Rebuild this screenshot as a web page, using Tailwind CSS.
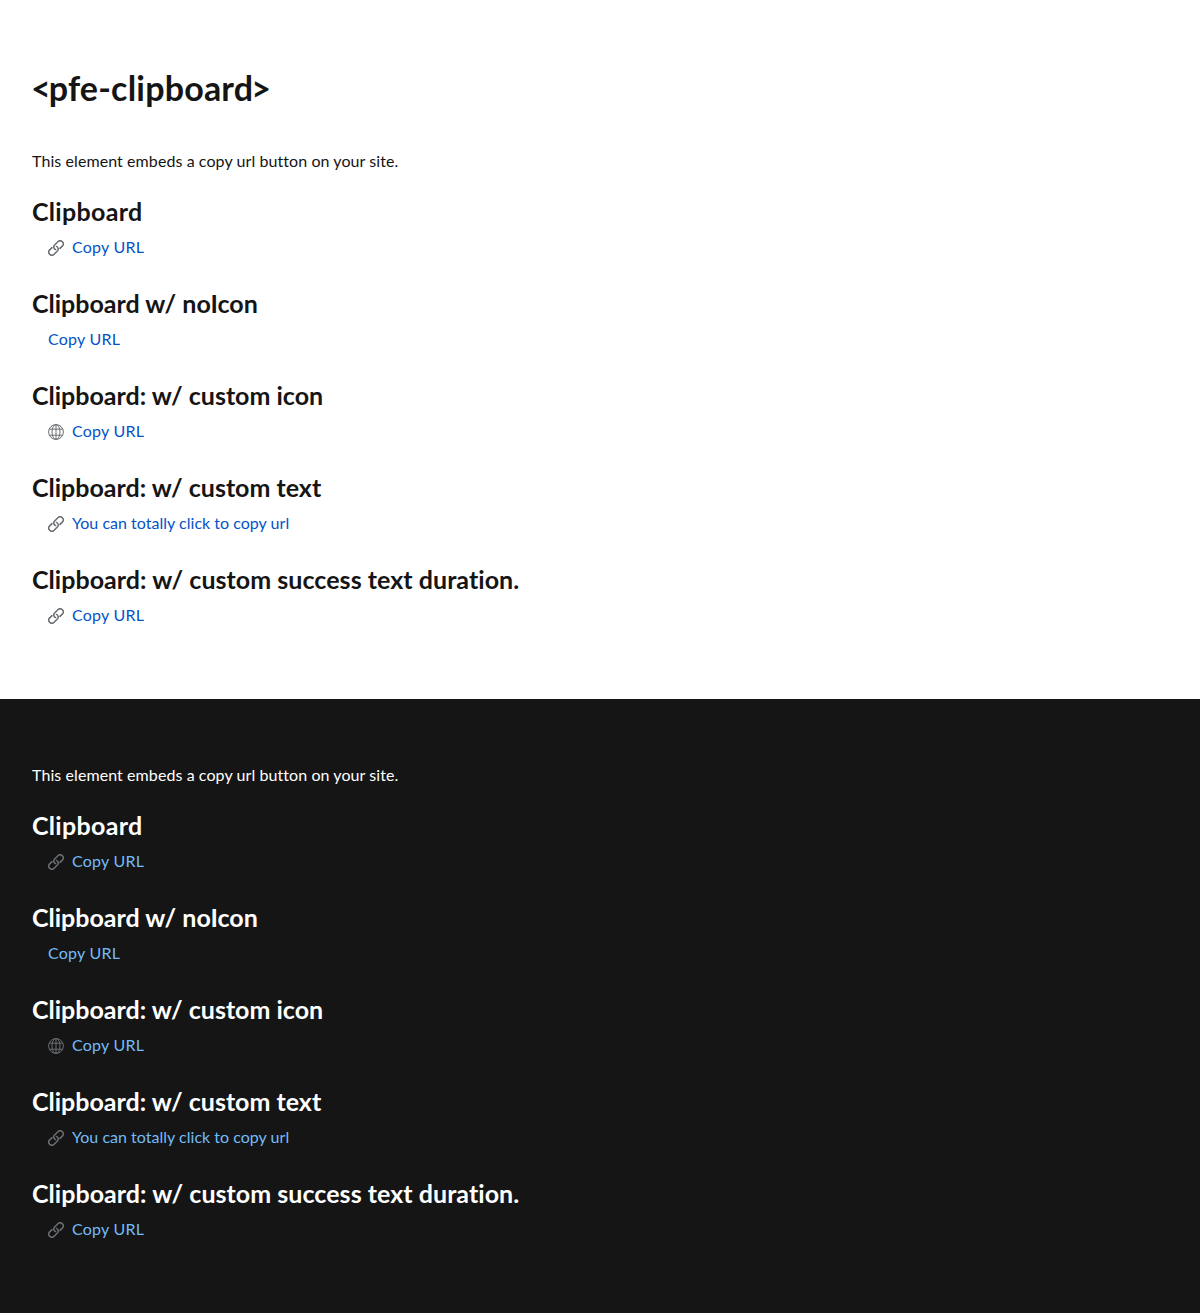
<!DOCTYPE html>
<html lang="en">
<head>
<meta charset="utf-8">
<title>pfe-clipboard</title>
<script src="https://cdn.jsdelivr.net/npm/@tailwindcss/browser@4"></script>
</head>
<body class="bg-white font-['Lato',sans-serif] text-base text-[#151515]">
<svg class="hidden">
  <symbol id="link" viewBox="0 0 16 16">
    <g fill="none" stroke="currentColor" stroke-width="1.5" stroke-linecap="round">
      <path d="M7.6 9.6A2.8 2.8 0 0 1 6.4 5.2L9.9 1.7A2.9 2.9 0 0 1 14.3 6.1L12 8.4"/>
      <path d="M8.4 6.4A2.8 2.8 0 0 1 9.6 10.8L6.1 14.3A2.9 2.9 0 0 1 1.7 9.9L4 7.6"/>
    </g>
  </symbol>
  <symbol id="globe" viewBox="0 0 16 16">
    <g fill="none" stroke="currentColor" stroke-width="1">
      <circle cx="8" cy="8" r="7.4"/>
      <ellipse cx="8" cy="8" rx="4" ry="7.4"/>
      <path d="M8 .6v14.8M1.5 5.2h13M1.5 11.2h13"/>
    </g>
  </symbol>
</svg>
<section class="h-[699px] px-8 pt-16">
  <h1 class="h-[50px] whitespace-nowrap text-[34px] leading-[48px] font-bold"><span class="-ml-px tracking-[-2px]">&lt;</span><span class="tracking-[0.2px]">pfe-clipboard</span><span class="-ml-0.5">&gt;</span></h1>
  <p class="mt-[35px] h-6 leading-6 tracking-[0.08px]">This element embeds a copy url button on your site.</p>
  <div class="mt-[23px] flex flex-col gap-8 text-[#0453c8]">
    <div>
      <h2 class="h-8 text-[25px] leading-[30px] font-bold tracking-[0.3px] text-[#151515]">Clipboard</h2>
      <div class="flex h-7 items-center gap-2 pt-2.5 pl-4"><svg class="mt-0.5 size-4 text-[#6a6e73]"><use href="#link"/></svg><a class="tracking-[0.22px]">Copy URL</a></div>
    </div>
    <div>
      <h2 class="h-8 text-[25px] leading-[30px] font-bold text-[#151515]">Clipboard w/ noIcon</h2>
      <div class="flex h-7 items-center gap-2 pt-2.5 pl-4"><a class="tracking-[0.22px]">Copy URL</a></div>
    </div>
    <div>
      <h2 class="h-8 text-[25px] leading-[30px] font-bold text-[#151515]">Clipboard: w/ custom icon</h2>
      <div class="flex h-7 items-center gap-2 pt-2.5 pl-4"><svg class="mt-0.5 size-4 text-[#6a6e73]"><use href="#globe"/></svg><a class="tracking-[0.22px]">Copy URL</a></div>
    </div>
    <div>
      <h2 class="h-8 text-[25px] leading-[30px] font-bold text-[#151515]">Clipboard: w/ custom text</h2>
      <div class="flex h-7 items-center gap-2 pt-2.5 pl-4"><svg class="mt-0.5 size-4 text-[#6a6e73]"><use href="#link"/></svg><a class="tracking-[0.02px]">You can totally click to copy url</a></div>
    </div>
    <div>
      <h2 class="h-8 text-[25px] leading-[30px] font-bold tracking-[0.04px] text-[#151515]">Clipboard: w/ custom success text duration.</h2>
      <div class="flex h-7 items-center gap-2 pt-2.5 pl-4"><svg class="mt-0.5 size-4 text-[#6a6e73]"><use href="#link"/></svg><a class="tracking-[0.22px]">Copy URL</a></div>
    </div>
  </div>
</section>
<section class="h-[614px] bg-[#151515] px-8 pt-16 text-white">
  <p class="h-6 leading-6 tracking-[0.08px]">This element embeds a copy url button on your site.</p>
  <div class="mt-[23px] flex flex-col gap-8 text-[#73bcf7]">
    <div>
      <h2 class="h-8 text-[25px] leading-[30px] font-bold tracking-[0.3px] text-white">Clipboard</h2>
      <div class="flex h-7 items-center gap-2 pt-2.5 pl-4"><svg class="mt-0.5 size-4 text-[#6a6e73]"><use href="#link"/></svg><a class="tracking-[0.22px]">Copy URL</a></div>
    </div>
    <div>
      <h2 class="h-8 text-[25px] leading-[30px] font-bold text-white">Clipboard w/ noIcon</h2>
      <div class="flex h-7 items-center gap-2 pt-2.5 pl-4"><a class="tracking-[0.22px]">Copy URL</a></div>
    </div>
    <div>
      <h2 class="h-8 text-[25px] leading-[30px] font-bold text-white">Clipboard: w/ custom icon</h2>
      <div class="flex h-7 items-center gap-2 pt-2.5 pl-4"><svg class="mt-0.5 size-4 text-[#6a6e73]"><use href="#globe"/></svg><a class="tracking-[0.22px]">Copy URL</a></div>
    </div>
    <div>
      <h2 class="h-8 text-[25px] leading-[30px] font-bold text-white">Clipboard: w/ custom text</h2>
      <div class="flex h-7 items-center gap-2 pt-2.5 pl-4"><svg class="mt-0.5 size-4 text-[#6a6e73]"><use href="#link"/></svg><a class="tracking-[0.02px]">You can totally click to copy url</a></div>
    </div>
    <div>
      <h2 class="h-8 text-[25px] leading-[30px] font-bold tracking-[0.04px] text-white">Clipboard: w/ custom success text duration.</h2>
      <div class="flex h-7 items-center gap-2 pt-2.5 pl-4"><svg class="mt-0.5 size-4 text-[#6a6e73]"><use href="#link"/></svg><a class="tracking-[0.22px]">Copy URL</a></div>
    </div>
  </div>
</section>
</body>
</html>
